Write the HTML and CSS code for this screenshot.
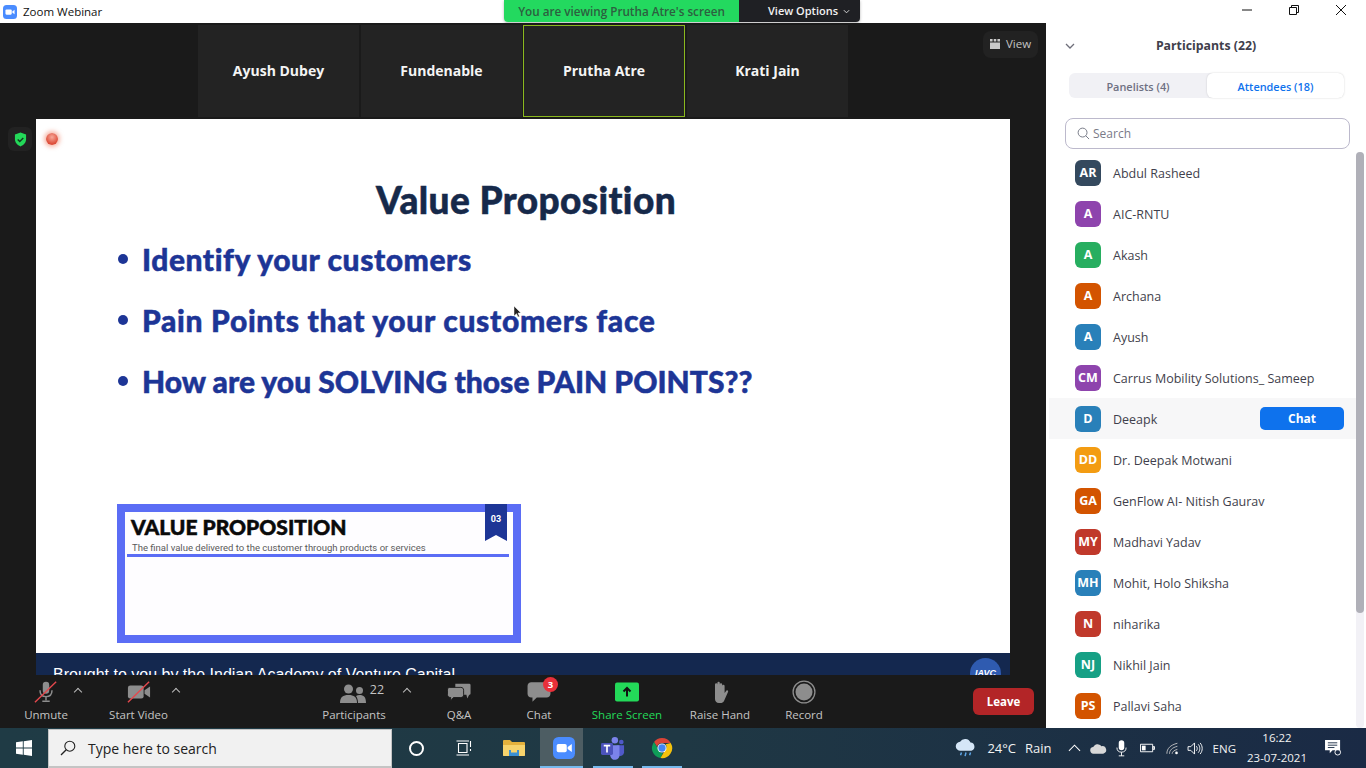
FILE: index.html
```html
<!DOCTYPE html>
<html lang="en">
<head>
<meta charset="utf-8">
<title>Zoom Webinar</title>
<link rel="stylesheet" href="styles.css">
</head>
<body>
<header class="titlebar">
  <svg class="app-icon" viewBox="0 0 16 16"><rect width="16" height="16" rx="4" fill="#4a8cff"/><rect x="2.8" y="5" width="7.2" height="6" rx="1.2" fill="#fff"/><path d="M10.6 7.3 13.2 5.4v5.2L10.6 8.7z" fill="#fff"/></svg>
  <span class="app-name">Zoom Webinar</span>
  <div class="banner">
    <span class="banner-green">You are viewing Prutha Atre's screen</span>
    <span class="banner-dark">View Options <svg class="banner-chev" viewBox="0 0 8 5"><path d="M1 1l3 3 3-3" fill="none" stroke="#ddd" stroke-width="1.1"/></svg></span>
  </div>
  <div class="winctl">
    <svg viewBox="0 0 12 12"><path d="M1 6h10" stroke="#111" stroke-width="1"/></svg>
    <svg viewBox="0 0 12 12"><path d="M1.5 3.5h7v7h-7zM3.5 3.5v-2h7v7h-2" fill="none" stroke="#111" stroke-width="1"/></svg>
    <svg viewBox="0 0 12 12"><path d="M1 1l10 10M11 1 1 11" stroke="#111" stroke-width="1"/></svg>
  </div>
</header>

<div class="workspace">
  <main class="meeting">
    <div class="gallery">
      <div class="thumb">Ayush Dubey</div>
      <div class="thumb">Fundenable</div>
      <div class="thumb thumb-active">Prutha Atre</div>
      <div class="thumb">Krati Jain</div>
      <div class="view-btn">
        <svg viewBox="0 0 12 12"><path d="M1 1h2.6v2.4H1zM4.7 1h2.6v2.4H4.7zM8.4 1H11v2.4H8.4zM1 4.4h10V11H1z" fill="#c9c9c9"/></svg>
        View
      </div>
    </div>
    <div class="shield-box">
      <svg viewBox="0 0 14 16"><path d="M7 .5 13 2.6v5.2c0 3.6-2.6 6.300-6 7.700C3.600 14.100 1 11.400 1 7.800V2.600z" fill="#23d959"/><path d="M4 8l2.200 2.200L10 6.300" fill="none" stroke="#15391f" stroke-width="1.500"/></svg>
    </div>
    <section class="slide">
      <span class="rec-dot"></span>
      <h1 class="slide-title">Value Proposition</h1>
      <ul class="points">
        <li class="pt-a">Identify your customers</li>
        <li class="pt-b">Pain Points that your customers face</li>
        <li class="pt-c">How are you SOLVING those PAIN POINTS??</li>
      </ul>
      <div class="mini">
        <div class="mini-title">VALUE PROPOSITION</div>
        <div class="mini-sub">The final value delivered to the customer through products or services</div>
        <div class="mini-rule"></div>
        <div class="ribbon">03</div>
      </div>
      <div class="slide-foot">
        <span class="foot-text">Brought to you by the Indian Academy of Venture Capital</span>
        <span class="foot-logo">IAVC</span>
      </div>
      <svg class="pointer" viewBox="0 0 8 13"><path d="M1 1v10l2.500-2.300L5 12l1.500-.6L5 8h3z" fill="#222" stroke="#fff" stroke-width=".5"/></svg>
    </section>
    <nav class="toolbar">
      <div class="tool tool-unmute">
        <svg class="tool-icon" viewBox="0 0 26 24"><rect x="9.500" y="1" width="7" height="13" rx="3.500" fill="#8d8d8d"/><path d="M6.500 10c0 4.500 2.800 7 6.500 7s6.500-2.500 6.500-7M13 17v4M9 22h8" fill="none" stroke="#8d8d8d" stroke-width="1.600"/><path d="M1 23 24 1" stroke="#e5484d" stroke-width="1.500"/></svg>
        <span>Unmute</span><i class="caret caret-a"></i>
      </div>
      <div class="tool tool-video">
        <svg class="tool-icon" viewBox="0 0 26 24"><rect x="1" y="5" width="17" height="14" rx="2.500" fill="#8d8d8d"/><path d="M19 10l6-4v12l-6-4z" fill="#8d8d8d"/><path d="M1 23 24 1" stroke="#e5484d" stroke-width="1.500"/></svg>
        <span>Start Video</span><i class="caret caret-b"></i>
      </div>
      <div class="tool tool-part">
        <div class="part-icon">
          <svg class="tool-icon" viewBox="0 0 26 20"><circle cx="8.500" cy="5" r="4.500" fill="#8d8d8d"/><circle cx="19.500" cy="6.500" r="3.500" fill="#8d8d8d"/><path d="M0 19c0-6 3-8 8.500-8s8.500 2 8.500 8z" fill="#8d8d8d"/><path d="M18 19c0-3-.6-5-2-7 1-.7 2.200-1 3.500-1 4.300 0 6.500 2 6.500 8z" fill="#8d8d8d"/></svg>
          <b>22</b>
        </div>
        <span>Participants</span><i class="caret caret-c"></i>
      </div>
      <div class="tool tool-qa">
        <svg class="tool-icon" viewBox="0 0 26 20"><path d="M9 1h15a1.500 1.500 0 0 1 1.500 1.500v9c0 .9-.6 1.500-1.500 1.500l-2 4-1-4H9z" fill="#8d8d8d"/><path d="M3 5h12c2 0 3 1.300 3 3v5c0 1.700-1 3-3 3H7l-3 3.500V16c-2 0-3.500-1.300-3.500-3V8C.5 6.300 1 5 3 5z" fill="#8d8d8d" stroke="#1a1a1a"/></svg>
        <span>Q&amp;A</span>
      </div>
      <div class="tool tool-chat">
        <svg class="tool-icon" viewBox="0 0 22 20"><path d="M4 1h14c2 0 3.500 1.500 3.500 3.500v7c0 2-1.500 3.500-3.500 3.500H9l-4 4v-4H4c-2 0-3.500-1.500-3.500-3.500v-7C.5 2.500 2 1 4 1z" fill="#8d8d8d"/></svg>
        <span>Chat</span><em class="chat-badge">3</em>
      </div>
      <div class="tool tool-share">
        <svg class="tool-icon" viewBox="0 0 24 19"><rect width="24" height="19" rx="2" fill="#23d959"/><path d="M12 14V6M8.500 9 12 5.500 15.500 9" fill="none" stroke="#111" stroke-width="2"/></svg>
        <span>Share Screen</span>
      </div>
      <div class="tool tool-hand">
        <svg class="tool-icon" viewBox="0 0 20 24"><path d="M5 12V4.500a1.200 1.200 0 0 1 2.400 0V3a1.200 1.200 0 0 1 2.400 0v1.500a1.200 1.200 0 0 1 2.400 0V6a1.200 1.200 0 0 1 2.400 0v7l1.700-2.300c.9-1.100 2.400 0 1.700 1.200L14 21c-.8 1.400-2 2-3.500 2H9c-2.600 0-4-1.800-4-4z" fill="#8d8d8d"/></svg>
        <span>Raise Hand</span>
      </div>
      <div class="tool tool-rec">
        <svg class="tool-icon" viewBox="0 0 22 22"><circle cx="11" cy="11" r="10" fill="none" stroke="#8d8d8d" stroke-width="1.200"/><circle cx="11" cy="11" r="7.800" fill="#8d8d8d"/></svg>
        <span>Record</span>
      </div>
      <button class="leave">Leave</button>
    </nav>
  </main>

  <aside class="panel">
    <div class="panel-head">
      <svg class="panel-chev" viewBox="0 0 10 6"><path d="M1 1l4 4 4-4" fill="none" stroke="#6e6e7a" stroke-width="1.300"/></svg>
      Participants (22)
    </div>
    <div class="tabs">
      <span class="tab">Panelists (4)</span>
      <span class="tab tab-on">Attendees (18)</span>
    </div>
    <div class="search">
      <svg viewBox="0 0 14 14"><circle cx="6" cy="6" r="4.800" fill="none" stroke="#6e7280" stroke-width="1"/><path d="M9.500 9.500 13 13" stroke="#6e7280" stroke-width="1"/></svg>
      Search
    </div>
    <div class="list-wrap">
      <ul class="list">
        <li class="row"><span class="av c-slate">AR</span>Abdul Rasheed</li>
        <li class="row"><span class="av c-purple">A</span>AIC-RNTU</li>
        <li class="row"><span class="av c-green">A</span>Akash</li>
        <li class="row"><span class="av c-orange">A</span>Archana</li>
        <li class="row"><span class="av c-blue">A</span>Ayush</li>
        <li class="row"><span class="av c-purple">CM</span>Carrus Mobility Solutions_ Sameep</li>
        <li class="row row-hover"><span class="av c-blue">D</span>Deeapk<button class="chat-btn">Chat</button></li>
        <li class="row"><span class="av c-amber">DD</span>Dr. Deepak Motwani</li>
        <li class="row"><span class="av c-orange">GA</span>GenFlow AI- Nitish Gaurav</li>
        <li class="row"><span class="av c-red">MY</span>Madhavi Yadav</li>
        <li class="row"><span class="av c-blue">MH</span>Mohit, Holo Shiksha</li>
        <li class="row"><span class="av c-red">N</span>niharika</li>
        <li class="row"><span class="av c-teal">NJ</span>Nikhil Jain</li>
        <li class="row"><span class="av c-orange">PS</span>Pallavi Saha</li>
      </ul>
      <div class="scroll"><div class="scroll-thumb"></div></div>
    </div>
  </aside>
</div>

<footer class="taskbar">
  <div class="tb-start">
    <svg viewBox="0 0 16 16"><path d="M0 2.300 6.800 1.300v6.300H0zM7.700 1.200 16 0v7.600H7.700zM0 8.400h6.800v6.300L0 13.700zM7.700 8.400H16V16l-8.300-1.200z" fill="#fff"/></svg>
  </div>
  <div class="tb-search">
    <svg viewBox="0 0 16 16"><circle cx="9.800" cy="6.200" r="5" fill="none" stroke="#222" stroke-width="1.100"/><path d="M6.200 9.800 1 15" stroke="#222" stroke-width="1.300"/></svg>
    Type here to search
  </div>
  <div class="tb-btn tb-cortana"><span class="ring"></span></div>
  <div class="tb-btn tb-view">
    <svg viewBox="0 0 16 16"><path d="M2.500 3.500h8.500v9H2.500zM.5 1h12.500M.5 15h12.500M14.500 1v6M14.500 9v2" fill="none" stroke="#fff" stroke-width="1.100"/></svg>
  </div>
  <div class="tb-btn tb-files">
    <svg viewBox="0 0 22 18"><path d="M0 2a1 1 0 0 1 1-1h6l2 2h12a1 1 0 0 1 1 1v12a1 1 0 0 1-1 1H1a1 1 0 0 1-1-1z" fill="#e5b13c"/><path d="M0 6h22v10a1 1 0 0 1-1 1H1a1 1 0 0 1-1-1z" fill="#f7d36c"/><rect x="6" y="11" width="10" height="6" fill="#3a90d4"/><rect x="8" y="11" width="6" height="2.500" fill="#f7d36c"/></svg>
  </div>
  <div class="tb-btn tb-zoom on">
    <svg viewBox="0 0 24 24"><rect width="24" height="24" rx="6" fill="#4a8cff"/><rect x="4" y="7.500" width="11" height="9" rx="2" fill="#fff"/><path d="M16 11l4.500-3.300v8.600L16 13z" fill="#fff"/></svg>
  </div>
  <div class="tb-btn tb-teams on">
    <svg viewBox="0 0 26 26"><circle cx="15" cy="4.500" r="3.500" fill="#7b83eb"/><circle cx="22" cy="6.500" r="2.500" fill="#5059c9"/><path d="M17 10h8v8a4 4 0 0 1-6 3z" fill="#5059c9"/><path d="M8 10h12v10a5 5 0 0 1-10 1.500z" fill="#7b83eb"/><rect y="7.500" width="13" height="13" rx="1.500" fill="#4b53bc"/><path d="M3 10.500h7M6.500 10.500V18" stroke="#fff" stroke-width="1.800"/></svg>
  </div>
  <div class="tb-btn tb-chrome on">
    <svg viewBox="0 0 24 24"><path d="M12 1a11 11 0 0 1 9.500 5.500H12a5.500 5.500 0 0 0-5.300 4L3.300 5.400A11 11 0 0 1 12 1z" fill="#db4437"/><path d="M3.300 5.400l5 8.600a4.500 4.500 0 0 0 4.700 3.400L10.300 23A11 11 0 0 1 3.300 5.400z" fill="#0f9d58"/><path d="M21.500 6.500A11 11 0 0 1 10.300 23l4.700-8.100A5 5 0 0 0 16 8z" fill="#f4c20d"/><circle cx="12" cy="12" r="5" fill="#fff"/><circle cx="12" cy="12" r="4" fill="#4285f4"/></svg>
  </div>
  <div class="tray">
    <svg class="tr-weather" viewBox="0 0 24 22"><path d="M6 14a5 5 0 0 1-.5-10A6.500 6.500 0 0 1 17 5a4.600 4.600 0 0 1 1 9z" fill="#d5e6f7"/><path d="M7 16l-1 3M12 16l-1 4M17 16l-1 3" stroke="#5ea6e8" stroke-width="1.600"/></svg>
    <span class="tr-temp">24°C</span>
    <span class="tr-rain">Rain</span>
    <svg class="tr-caret" viewBox="0 0 14 8"><path d="M1 7l6-6 6 6" fill="none" stroke="#fff" stroke-width="1.100"/></svg>
    <svg class="tr-cloud" viewBox="0 0 18 11"><path d="M4 11a3.500 3.500 0 0 1-.5-7A5 5 0 0 1 12 3a4 4 0 0 1 2 8z" fill="#d8d8d8"/></svg>
    <svg class="tr-mic" viewBox="0 0 12 18"><rect x="3" y="0" width="6" height="11" rx="3" fill="#fff"/><path d="M1 8c0 3.500 2 5 5 5s5-1.500 5-5M6 13v4M3 17h6" fill="none" stroke="#fff"/></svg>
    <svg class="tr-batt" viewBox="0 0 16 10"><path d="M.5 1h13v8H.5zM14 3.500h1.500v3H14z" fill="none" stroke="#fff"/><rect x="2" y="2.500" width="4" height="5" fill="#fff"/></svg>
    <svg class="tr-wifi" viewBox="0 0 16 14"><path d="M1 13c0-6 4-10 12-12M4 13c0-4 3-7 9-8.500M7 13c0-2 2-4 6-5" fill="none" stroke="#c9c9c9" stroke-width="1"/><circle cx="12" cy="12" r="1.500" fill="#fff"/></svg>
    <svg class="tr-sound" viewBox="0 0 17 14"><path d="M1 5h3l4-4v12L4 9H1z" fill="none" stroke="#fff"/><path d="M10 4.500c1.200 1.500 1.200 3.500 0 5M12 2.500c2.200 2.500 2.200 6.500 0 9M14 1c3 3.500 3 8.500 0 12" fill="none" stroke="#fff"/></svg>
    <span class="tr-lang">ENG</span>
    <span class="tr-clock"><span>16:22</span><span>23-07-2021</span></span>
    <svg class="tr-notif" viewBox="0 0 18 17"><path d="M0 0h16v11H8l-3 3v-3H0z" fill="#fff"/><path d="M3 3h10M3 5.500h10M3 8h7" stroke="#20314a"/><circle cx="13.500" cy="13" r="3" fill="none" stroke="#fff"/></svg>
  </div>
</footer>
</body>
</html>
```

FILE: styles.css
```css
* { box-sizing: border-box; }
html, body { margin: 0; padding: 0; }
body {
  width: 1366px;
  height: 768px;
  overflow: hidden;
  font-family: "Open Sans", "Noto Sans", sans-serif;
  display: flex;
  flex-direction: column;
  background: #fff;
}
ul { list-style: none; margin: 0; padding: 0; }
svg { display: block; }

/* title bar */
.titlebar {
  position: relative;
  height: 23px;
  flex: none;
  display: flex;
  align-items: center;
  background: #fff;
  padding-left: 3px;
}
.app-icon { width: 14px; height: 14px; }
.app-name { margin-left: 6px; font-size: 11.500px; color: #111; }
.banner {
  position: absolute;
  left: 504px;
  top: 0;
  height: 22px;
  width: 356px;
  display: flex;
  font-size: 11px;
  font-weight: 600;
  line-height: 22px;
  border-radius: 0 0 4px 4px;
  overflow: hidden;
  box-shadow: 0 1px 3px rgba(0, 0, 0, .3);
}
.banner-green { width: 235px; background: #23d95f; color: #2d5f40; text-align: center; font-size: 11.700px; }
.banner-dark {
  flex: 1;
  background: #1f2024;
  color: #f2f2f2;
  display: flex;
  align-items: center;
  padding-left: 29px;
  gap: 5px;
}
.banner-chev { width: 7px; height: 5px; }
.winctl {
  margin-left: auto;
  display: flex;
  gap: 35px;
  padding-right: 19px;
}
.winctl svg { width: 12px; height: 12px; margin-top: -3px; }

.workspace { flex: 1; display: flex; min-height: 0; }

/* meeting */
.meeting {
  position: relative;
  width: 1046px;
  flex: none;
  background: #1a1a1a;
  display: flex;
  flex-direction: column;
}
.gallery {
  position: relative;
  height: 96px;
  flex: none;
  padding: 2px 0 2px 198px;
  display: flex;
  gap: 2px;
}
.thumb {
  width: 161px;
  background: #232323;
  color: #f4f4f4;
  font-size: 14px;
  font-weight: 700;
  display: flex;
  align-items: center;
  justify-content: center;
  padding-bottom: 2px;
}
.thumb-active { outline: 1px solid #8ab81e; outline-offset: -1px; width: 162px; margin-left: -1px; }
.view-btn {
  position: absolute;
  left: 983px;
  top: 8px;
  width: 55px;
  height: 27px;
  border-radius: 8px;
  background: #222;
  color: #c4c4c4;
  font-size: 11.500px;
  display: flex;
  align-items: center;
  gap: 5px;
  padding: 0 0 2px 6px;
}
.view-btn svg { width: 12px; height: 12px; }
.shield-box {
  position: absolute;
  left: 8px;
  top: 104px;
  width: 24px;
  height: 24px;
  border-radius: 6px;
  background: #222;
  display: flex;
  align-items: center;
  justify-content: center;
}
.shield-box svg { width: 13px; height: 15px; }

/* slide */
.slide {
  position: relative;
  margin-left: 36px;
  width: 974px;
  height: 556px;
  flex: none;
  background: #fff;
  overflow: hidden;
  display: flex;
  flex-direction: column;
  font-family: Lato, "Open Sans", sans-serif;
}
.rec-dot {
  position: absolute;
  left: 10px;
  top: 14px;
  width: 12px;
  height: 12px;
  border-radius: 50%;
  background: radial-gradient(circle at 50% 35%, #f7a899, #dc4a36 70%);
  box-shadow: 0 0 4px 2px rgba(240, 110, 80, .5);
}
.slide-title {
  margin: 57px 0 0 6px;
  text-align: center;
  font-size: 37px;
  font-weight: 900;
  line-height: 48px;
  color: #16294a;
  letter-spacing: .4px;
  -webkit-text-stroke: .5px #16294a;
}
.points { margin: 4px 0 0 82px; }
.points li {
  display: flex;
  align-items: center;
  height: 61px;
  font-size: 30px;
  font-weight: 900;
  color: #1d3596;
  white-space: nowrap;
  -webkit-text-stroke: .5px #1d3596;
}
.points .pt-a { letter-spacing: .55px; }
.points .pt-b { letter-spacing: .68px; }
.points li::before {
  content: "";
  width: 10px;
  height: 10px;
  border-radius: 50%;
  background: #1d3596;
  margin-right: 14px;
  flex: none;
}
.mini {
  position: relative;
  margin: 93px 0 0 81px;
  width: 404px;
  height: 139px;
  flex: none;
  border: 8px solid #5b6df5;
  background: #fefdff;
  padding: 3px 0 0 6px;
}
.mini-title {
  font-size: 21px;
  font-weight: 900;
  line-height: 24px;
  color: #0a0a0a;
  white-space: nowrap;
  -webkit-text-stroke: .5px #0a0a0a;
}
.mini-sub {
  font-family: Roboto, sans-serif;
  font-size: 9.500px;
  line-height: 11px;
  margin: 3px 0 0 1px;
  color: #5a5a5a;
  white-space: nowrap;
}
.mini-rule { height: 3px; margin: 1px 4px 0 -4px; background: #5b6df5; }
.ribbon {
  position: absolute;
  left: 360px;
  top: -8px;
  width: 22px;
  height: 37px;
  background: #1d3596;
  color: #fff;
  font-family: Roboto, sans-serif;
  font-size: 9px;
  font-weight: 700;
  text-align: center;
  padding-top: 10px;
  clip-path: polygon(0 0, 100% 0, 100% 100%, 50% 84%, 0 100%);
}
.slide-foot {
  position: relative;
  margin-top: 10px;
  height: 40px;
  flex: none;
  background: #14284f;
  padding: 11px 0 0 17px;
}
.foot-text {
  font-family: "Liberation Sans", sans-serif;
  font-size: 16px;
  line-height: 18px;
  color: #fff;
  white-space: nowrap;
}
.foot-logo {
  position: absolute;
  left: 934px;
  top: 5px;
  width: 31px;
  height: 31px;
  border-radius: 50%;
  background: #2f5bb0;
  color: #fff;
  font: italic 700 9px/30px "Liberation Sans", sans-serif;
  text-align: center;
}
.pointer { position: absolute; left: 477px; top: 186px; width: 8px; height: 13px; }

/* toolbar */
.toolbar {
  flex: 1;
  display: flex;
  align-items: flex-start;
  padding: 5px 12px 0 12px;
  background: #1a1a1a;
  color: #c4c4c4;
  font-size: 11.500px;
}
.tool {
  position: relative;
  display: flex;
  flex-direction: column;
  align-items: center;
  flex: none;
  white-space: nowrap;
}
.tool > span { margin-top: 3px; line-height: 16px; }
.tool-icon { width: 24px; height: 24px; }
.tool-unmute { width: 68px; }
.tool-video { width: 76px; margin-left: 20px; padding-left: 1px; }
.tool-part { width: 80px; margin-left: 138px; }
.tool-qa { width: 40px; margin-left: 45px; }
.tool-chat { width: 40px; margin-left: 40px; }
.tool-share { width: 80px; margin-left: 28px; color: #23d959; }
.tool-hand { width: 80px; margin-left: 13px; }
.tool-rec { width: 60px; margin-left: 14px; }
.part-icon { display: flex; height: 24px; align-items: center; gap: 4px; margin-left: 16px; }
.part-icon .tool-icon { width: 26px; height: 20px; margin-top: 3px; }
.part-icon b { font-weight: 400; font-size: 12.500px; margin-top: -6px; }
.caret {
  position: absolute;
  top: 9px;
  width: 6px;
  height: 6px;
  border-left: 1.300px solid #bbb;
  border-top: 1.300px solid #bbb;
  transform: rotate(45deg);
}
.caret-a { left: 63px; }
.caret-b { left: 73px; }
.caret-c { left: 90px; }
.chat-badge {
  position: absolute;
  left: 24px;
  top: -3px;
  width: 15px;
  height: 15px;
  border-radius: 50%;
  background: #e8303a;
  color: #fff;
  font-style: normal;
  font-weight: 700;
  font-size: 9.500px;
  line-height: 15px;
  text-align: center;
}
.leave {
  margin: 8px 0 0 auto;
  width: 61px;
  height: 27px;
  border: 0;
  border-radius: 6px;
  background: #b32527;
  color: #fff;
  font: 700 11.500px "Open Sans", sans-serif;
}

/* participants */
.panel {
  width: 320px;
  flex: none;
  display: flex;
  flex-direction: column;
  background: #fff;
  position: relative;
}
.panel-head {
  position: relative;
  height: 44px;
  margin-bottom: 6px;
  flex: none;
  display: flex;
  align-items: center;
  justify-content: center;
  font-size: 12.300px;
  font-weight: 700;
  color: #40404c;
}
.panel-chev { position: absolute; left: 19px; top: 20px; width: 10px; height: 6px; }
.tabs {
  margin-left: 23px;
  width: 275px;
  height: 25px;
  flex: none;
  display: flex;
  background: #f1f1f5;
  border-radius: 6px;
  font-size: 10.900px;
  font-weight: 600;
  line-height: 28px;
  text-align: center;
}
.tab { width: 138px; color: #6e7082; }
.tab-on {
  width: 137px;
  background: #fff;
  color: #0e72ed;
  border-radius: 6px;
  box-shadow: 0 0 2px rgba(0, 0, 0, .18);
}
.search {
  margin: 20px 0 0 19px;
  width: 285px;
  height: 31px;
  flex: none;
  border: 1px solid #bcb9cc;
  border-radius: 8px;
  display: flex;
  align-items: center;
  gap: 3px;
  padding-left: 11px;
  font-size: 12px;
  color: #7a7a88;
}
.search svg { width: 13px; height: 13px; }
.list-wrap { margin-top: 3px; flex: 1; min-height: 0; display: flex; padding-left: 3px; }
.list { flex: 1; }
.row {
  height: 41px;
  display: flex;
  align-items: center;
  padding: 2px 0 0 26px;
  font-size: 12.500px;
  color: #3f3f4c;
  white-space: nowrap;
}
.row-hover { background: #f7f7f8; }
.av {
  width: 26px;
  height: 26px;
  border-radius: 6px;
  margin: -2px 12px 0 0;
  color: #fff;
  font-weight: 700;
  font-size: 12.500px;
  display: flex;
  align-items: center;
  justify-content: center;
  flex: none;
}
.c-slate { background: #34495e; }
.c-purple { background: #8e44ad; }
.c-green { background: #27ae60; }
.c-orange { background: #d35400; }
.c-blue { background: #2980b9; }
.c-amber { background: #f39c12; }
.c-red { background: #c0392b; }
.c-teal { background: #16a085; }
.chat-btn {
  margin: -2px 12px 0 auto;
  width: 84px;
  height: 23px;
  border: 0;
  border-radius: 5px;
  background: #0e72ed;
  color: #fff;
  font: 700 12px "Open Sans", sans-serif;
}
.scroll {
  width: 8px;
  margin-right: 2px;
  background: #f2f1f6;
  border-radius: 4px;
  flex: none;
}
.scroll-thumb { height: 461px; background: #b0b0b8; border-radius: 4px; }

/* taskbar */
.taskbar {
  height: 40px;
  flex: none;
  display: flex;
  align-items: stretch;
  background: linear-gradient(90deg, #1f3b45 0%, #1f3844 50%, #1a2a45 100%);
  color: #fff;
}
.tb-start { width: 48px; display: flex; align-items: center; justify-content: center; }
.tb-start svg { width: 16px; height: 16px; }
.tb-search {
  width: 344px;
  margin-top: 1px;
  background: #f1f1f1;
  border: 1px solid #c4c4c4;
  border-bottom-width: 2px;
  display: flex;
  align-items: center;
  gap: 12px;
  padding-left: 11px;
  font-size: 14px;
  color: #222;
}
.tb-search svg { width: 16px; height: 16px; }
.tb-btn { display: flex; align-items: center; justify-content: center; flex: none; }
.tb-cortana { width: 48px; }
.ring { width: 15px; height: 15px; border: 2px solid #fff; border-radius: 50%; }
.tb-view { width: 48px; }
.tb-view svg { width: 16px; height: 16px; }
.tb-files { width: 52px; }
.tb-files svg { width: 22px; height: 18px; }
.tb-btn.on { border-bottom: 2px solid #76b9ed; padding-top: 2px; }
.tb-zoom { width: 43px; background: #4d5d63; padding-left: 5px; }
.tb-zoom svg { width: 22px; height: 22px; }
.tb-teams { width: 40px; margin-left: 10px; }
.tb-teams svg { width: 24px; height: 24px; }
.tb-chrome { width: 40px; margin-left: 9px; }
.tb-chrome svg { width: 22px; height: 22px; }
.tray {
  margin-left: auto;
  display: flex;
  align-items: center;
  font-size: 13px;
  color: #f2f2f2;
  padding-right: 24px;
}
.tr-weather { width: 22px; height: 20px; }
.tr-temp { margin-left: 10px; }
.tr-rain { margin-left: 9px; }
.tr-caret { width: 13px; height: 8px; margin-left: 16px; }
.tr-cloud { width: 17px; height: 11px; margin-left: 9px; }
.tr-mic { width: 11px; height: 17px; margin-left: 9px; }
.tr-batt { width: 15px; height: 10px; margin-left: 13px; }
.tr-wifi { width: 14px; height: 13px; margin-left: 11px; }
.tr-sound { width: 16px; height: 13px; margin-left: 7px; }
.tr-lang { margin-left: 10px; font-size: 11.500px; }
.tr-clock {
  width: 58px;
  margin-left: 12px;
  display: flex;
  flex-direction: column;
  align-items: center;
  line-height: 20px;
  font-size: 11.500px;
  white-space: nowrap;
}
.tr-notif { width: 17px; height: 16px; margin-left: 19px; }
```
